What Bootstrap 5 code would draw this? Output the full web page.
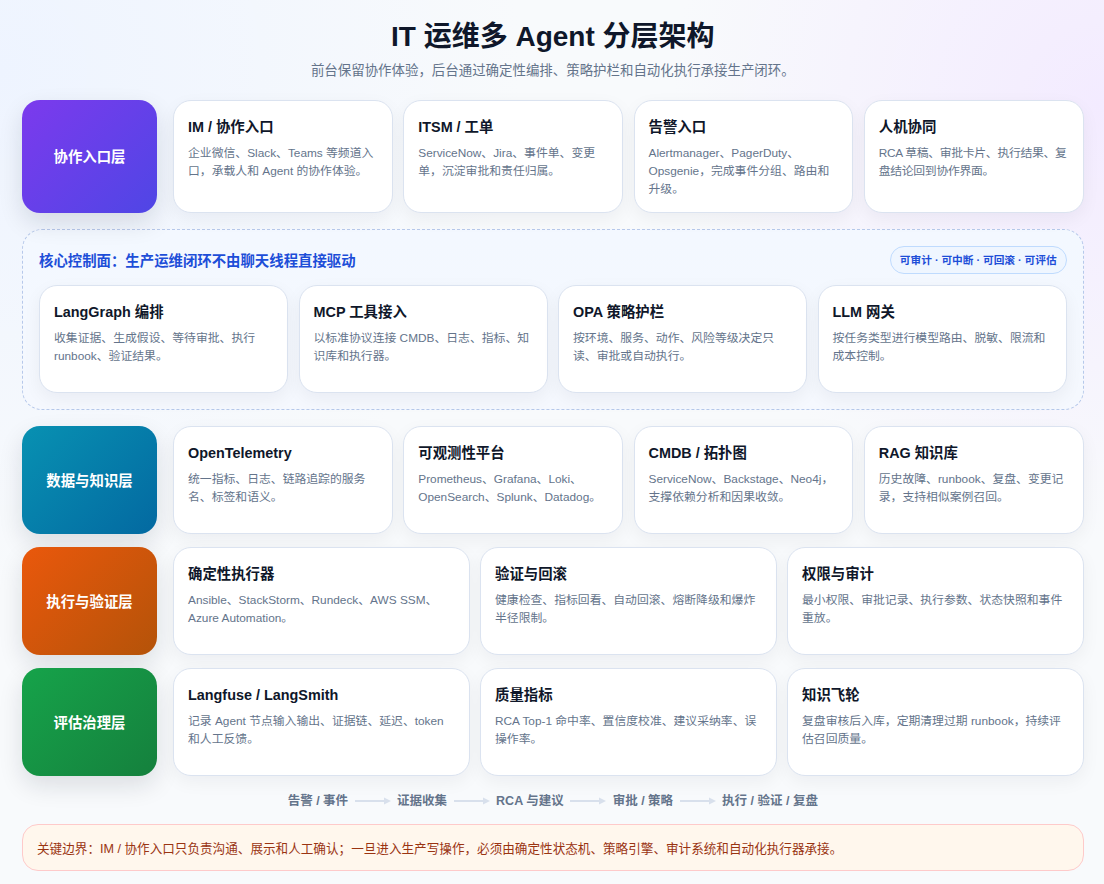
<!DOCTYPE html>
<html lang="zh-CN">
<head>
<meta charset="utf-8">
<title>IT 运维多 Agent 分层架构</title>
<link href="https://cdn.jsdelivr.net/npm/bootstrap@5.3.0/dist/css/bootstrap.min.css" rel="stylesheet">
<style>
html,body{height:100%}
body{font-family:"Liberation Sans","Noto Sans CJK SC",sans-serif;color:#0f172a;background:radial-gradient(circle at 100% 12%,#f3ebff 0,rgba(243,235,255,0) 32%),radial-gradient(circle at 0 8%,#eef4ff 0,rgba(238,244,255,0) 38%),#f8fafc;overflow:hidden}
.page{padding:17px 20.4px 0 22px;width:1104px}
.page h1{font-size:28px;font-weight:700;line-height:40px;margin:0;color:#0f172a}
.sub{font-size:13.44px;line-height:20px;color:#64748b;margin-top:4px;margin-bottom:19px}
.layer{gap:16px}
.layer+.layer{margin-top:13px}
.lbl{flex:0 0 135px;border-radius:18px;color:#fff;font-size:14.4px;font-weight:700;padding-top:3px;box-shadow:0 10px 24px rgba(15,23,42,.12)}
.l1{background:linear-gradient(135deg,#7c3aed,#4f46e5)}
.l2{background:linear-gradient(135deg,#0891b2,#0369a1)}
.l3{background:linear-gradient(135deg,#ea580c,#b45309)}
.l4{background:linear-gradient(135deg,#16a34a,#15803d)}
.cells{flex:1 1 0;min-width:0;display:grid;gap:10.4px}
.c4{grid-template-columns:repeat(4,minmax(0,1fr))}
.c3{grid-template-columns:repeat(3,minmax(0,1fr))}
.cell{background:#fff;border:1px solid #dbe3f0;border-radius:18px;padding:14px;min-height:108px;box-shadow:0 6px 18px rgba(15,23,42,.05)}
.cell h3{font-size:14.4px;font-weight:700;line-height:23px;padding-top:1px;margin:0 0 5px;color:#0f172a}
.cell p{font-size:11.84px;line-height:18px;margin:0;color:#64748b}
.cell p.tight{letter-spacing:-.3px}
.core{margin:16px 0;padding:16px;border:1px dashed #b6c8ea;border-radius:20px;background:linear-gradient(180deg,#f3f8ff,#f5f8fe)}
.core-h{margin-bottom:11px}
.core-t{font-size:14.4px;font-weight:700;color:#1d4ed8;padding-top:3px}
.pill{font-size:10.7px;font-weight:700;line-height:26px;padding:0 9px;border:1px solid #bfdbfe;border-radius:14px;color:#1d4ed8;background:#eff6ff}
.flow{gap:6.5px;font-size:12.5px;font-weight:700;color:#64748b;margin-top:15px;height:20px;line-height:20px}
.flow svg{display:block}
.note{margin-top:13px;padding:2px 14px 0;height:47px;line-height:45px;font-size:12.6px;color:#9a3412;background:#fff7ed;border:1px solid #fecaca;border-radius:16px}
</style>
</head>
<body>
<div class="page">
  <header class="text-center">
    <h1>IT 运维多 Agent 分层架构</h1>
    <div class="sub">前台保留协作体验，后台通过确定性编排、策略护栏和自动化执行承接生产闭环。</div>
  </header>

  <section class="layer d-flex">
    <div class="lbl l1 d-flex align-items-center justify-content-center">协作入口层</div>
    <div class="cells c4">
      <div class="cell"><h3>IM / 协作入口</h3><p>企业微信、Slack、Teams 等频道入口，承载人和 Agent 的协作体验。</p></div>
      <div class="cell"><h3>ITSM / 工单</h3><p>ServiceNow、Jira、事件单、变更单，沉淀审批和责任归属。</p></div>
      <div class="cell"><h3>告警入口</h3><p>Alertmanager、PagerDuty、Opsgenie，完成事件分组、路由和升级。</p></div>
      <div class="cell"><h3>人机协同</h3><p class="tight">RCA 草稿、审批卡片、执行结果、复盘结论回到协作界面。</p></div>
    </div>
  </section>

  <section class="core">
    <div class="core-h d-flex justify-content-between align-items-center">
      <div class="core-t">核心控制面：生产运维闭环不由聊天线程直接驱动</div>
      <div class="pill">可审计 · 可中断 · 可回滚 · 可评估</div>
    </div>
    <div class="cells c4">
      <div class="cell"><h3>LangGraph 编排</h3><p>收集证据、生成假设、等待审批、执行 runbook、验证结果。</p></div>
      <div class="cell"><h3>MCP 工具接入</h3><p>以标准协议连接 CMDB、日志、指标、知识库和执行器。</p></div>
      <div class="cell"><h3>OPA 策略护栏</h3><p>按环境、服务、动作、风险等级决定只读、审批或自动执行。</p></div>
      <div class="cell"><h3>LLM 网关</h3><p>按任务类型进行模型路由、脱敏、限流和成本控制。</p></div>
    </div>
  </section>

  <section class="layer d-flex">
    <div class="lbl l2 d-flex align-items-center justify-content-center">数据与知识层</div>
    <div class="cells c4">
      <div class="cell"><h3>OpenTelemetry</h3><p>统一指标、日志、链路追踪的服务名、标签和语义。</p></div>
      <div class="cell"><h3>可观测性平台</h3><p>Prometheus、Grafana、Loki、OpenSearch、Splunk、Datadog。</p></div>
      <div class="cell"><h3>CMDB / 拓扑图</h3><p>ServiceNow、Backstage、Neo4j，支撑依赖分析和因果收敛。</p></div>
      <div class="cell"><h3>RAG 知识库</h3><p>历史故障、runbook、复盘、变更记录，支持相似案例召回。</p></div>
    </div>
  </section>
  <section class="layer d-flex">
    <div class="lbl l3 d-flex align-items-center justify-content-center">执行与验证层</div>
    <div class="cells c3">
      <div class="cell"><h3>确定性执行器</h3><p>Ansible、StackStorm、Rundeck、AWS SSM、Azure Automation。</p></div>
      <div class="cell"><h3>验证与回滚</h3><p>健康检查、指标回看、自动回滚、熔断降级和爆炸半径限制。</p></div>
      <div class="cell"><h3>权限与审计</h3><p>最小权限、审批记录、执行参数、状态快照和事件重放。</p></div>
    </div>
  </section>
  <section class="layer d-flex">
    <div class="lbl l4 d-flex align-items-center justify-content-center">评估治理层</div>
    <div class="cells c3">
      <div class="cell"><h3>Langfuse / LangSmith</h3><p>记录 Agent 节点输入输出、证据链、延迟、token 和人工反馈。</p></div>
      <div class="cell"><h3>质量指标</h3><p>RCA Top-1 命中率、置信度校准、建议采纳率、误操作率。</p></div>
      <div class="cell"><h3>知识飞轮</h3><p>复盘审核后入库，定期清理过期 runbook，持续评估召回质量。</p></div>
    </div>
  </section>

  <div class="flow d-flex justify-content-center align-items-center">
    <span>告警 / 事件</span>
    <svg width="36" height="8" viewBox="0 0 36 8"><path d="M0 4H30" stroke="#d8e0ec" stroke-width="2"/><path d="M29 0.5L36 4L29 7.5Z" fill="#d8e0ec"/></svg>
    <span>证据收集</span>
    <svg width="36" height="8" viewBox="0 0 36 8"><path d="M0 4H30" stroke="#d8e0ec" stroke-width="2"/><path d="M29 0.5L36 4L29 7.5Z" fill="#d8e0ec"/></svg>
    <span>RCA 与建议</span>
    <svg width="36" height="8" viewBox="0 0 36 8"><path d="M0 4H30" stroke="#d8e0ec" stroke-width="2"/><path d="M29 0.5L36 4L29 7.5Z" fill="#d8e0ec"/></svg>
    <span>审批 / 策略</span>
    <svg width="36" height="8" viewBox="0 0 36 8"><path d="M0 4H30" stroke="#d8e0ec" stroke-width="2"/><path d="M29 0.5L36 4L29 7.5Z" fill="#d8e0ec"/></svg>
    <span>执行 / 验证 / 复盘</span>
  </div>
  <div class="note">关键边界：IM / 协作入口只负责沟通、展示和人工确认；一旦进入生产写操作，必须由确定性状态机、策略引擎、审计系统和自动化执行器承接。</div>
</div>
<script src="https://cdn.jsdelivr.net/npm/bootstrap@5.3.0/dist/js/bootstrap.bundle.min.js"></script>
</body>
</html>
